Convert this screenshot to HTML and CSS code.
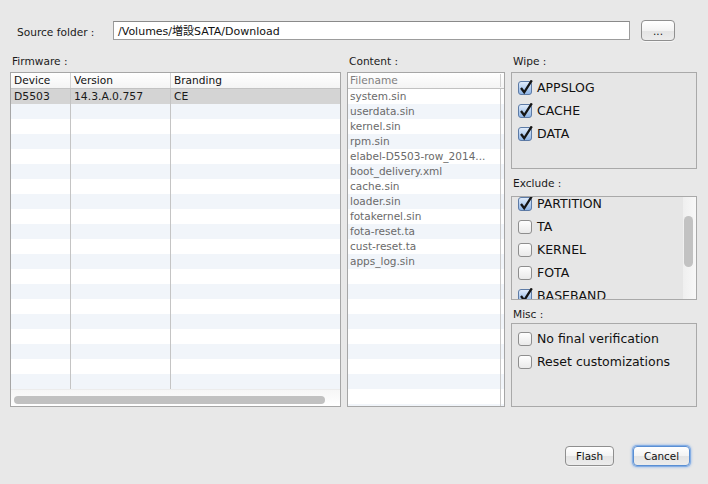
FILE: index.html
```html
<!DOCTYPE html>
<html>
<head>
<meta charset="utf-8">
<title>Flash</title>
<link rel="stylesheet" href="styles.css">
</head>
<body>
<svg class="defs" aria-hidden="true">
  <defs>
    <linearGradient id="gOn" x1="0" y1="0" x2="0" y2="1">
      <stop offset="0" stop-color="#e4eefb"/>
      <stop offset="0.5" stop-color="#b5cff0"/>
      <stop offset="1" stop-color="#8db4e6"/>
    </linearGradient>
    <linearGradient id="gOff" x1="0" y1="0" x2="0" y2="1">
      <stop offset="0" stop-color="#ffffff"/>
      <stop offset="1" stop-color="#e9e9e9"/>
    </linearGradient>
    <symbol id="cbOn" viewBox="0 0 16 16">
      <rect x="0.5" y="1.5" width="13" height="13" rx="2.5" fill="url(#gOn)" stroke="#5d7ba6"/>
      <path d="M3 8 L6.2 12.3 L13.8 0.3" fill="none" stroke="#151515" stroke-width="2.3"/>
    </symbol>
    <symbol id="cbOff" viewBox="0 0 16 16">
      <rect x="0.5" y="1.5" width="13" height="13" rx="2.5" fill="url(#gOff)" stroke="#8e8e8e"/>
    </symbol>
  </defs>
</svg>
<div class="window">
  <div class="source-row">
    <span class="src-label">Source folder :</span>
    <div class="path-field">/Volumes/増設SATA/Download</div>
    <button class="btn btn-dots">...</button>
  </div>

  <div class="main">
    <div class="col col-fw">
      <div class="col-label">Firmware :</div>
      <div class="table fw-table">
        <div class="thead fw-row">
          <div class="c c1">Device</div><div class="c c2">Version</div><div class="c c3">Branding</div>
        </div>
        <div class="tbody">
          <div class="fw-row row sel"><div class="c c1">D5503</div><div class="c c2">14.3.A.0.757</div><div class="c c3">CE</div></div>
          <div class="fw-row row"><div class="c c1"></div><div class="c c2"></div><div class="c c3"></div></div>
          <div class="fw-row row"><div class="c c1"></div><div class="c c2"></div><div class="c c3"></div></div>
          <div class="fw-row row"><div class="c c1"></div><div class="c c2"></div><div class="c c3"></div></div>
          <div class="fw-row row"><div class="c c1"></div><div class="c c2"></div><div class="c c3"></div></div>
          <div class="fw-row row"><div class="c c1"></div><div class="c c2"></div><div class="c c3"></div></div>
          <div class="fw-row row"><div class="c c1"></div><div class="c c2"></div><div class="c c3"></div></div>
          <div class="fw-row row"><div class="c c1"></div><div class="c c2"></div><div class="c c3"></div></div>
          <div class="fw-row row"><div class="c c1"></div><div class="c c2"></div><div class="c c3"></div></div>
          <div class="fw-row row"><div class="c c1"></div><div class="c c2"></div><div class="c c3"></div></div>
          <div class="fw-row row"><div class="c c1"></div><div class="c c2"></div><div class="c c3"></div></div>
          <div class="fw-row row"><div class="c c1"></div><div class="c c2"></div><div class="c c3"></div></div>
          <div class="fw-row row"><div class="c c1"></div><div class="c c2"></div><div class="c c3"></div></div>
          <div class="fw-row row"><div class="c c1"></div><div class="c c2"></div><div class="c c3"></div></div>
          <div class="fw-row row"><div class="c c1"></div><div class="c c2"></div><div class="c c3"></div></div>
          <div class="fw-row row"><div class="c c1"></div><div class="c c2"></div><div class="c c3"></div></div>
          <div class="fw-row row"><div class="c c1"></div><div class="c c2"></div><div class="c c3"></div></div>
          <div class="fw-row row"><div class="c c1"></div><div class="c c2"></div><div class="c c3"></div></div>
          <div class="fw-row row"><div class="c c1"></div><div class="c c2"></div><div class="c c3"></div></div>
          <div class="fw-row row"><div class="c c1"></div><div class="c c2"></div><div class="c c3"></div></div>
        </div>
        <div class="hscroll"><div class="hthumb"></div></div>
      </div>
    </div>

    <div class="col col-ct">
      <div class="col-label">Content :</div>
      <div class="table ct-table">
        <div class="thead ct-row"><div class="c cf">Filename</div></div>
        <div class="tbody ct-body">
          <div class="ct-row row"><div class="c cf">system.sin</div></div>
          <div class="ct-row row"><div class="c cf">userdata.sin</div></div>
          <div class="ct-row row"><div class="c cf">kernel.sin</div></div>
          <div class="ct-row row"><div class="c cf">rpm.sin</div></div>
          <div class="ct-row row"><div class="c cf">elabel-D5503-row_2014...</div></div>
          <div class="ct-row row"><div class="c cf">boot_delivery.xml</div></div>
          <div class="ct-row row"><div class="c cf">cache.sin</div></div>
          <div class="ct-row row"><div class="c cf">loader.sin</div></div>
          <div class="ct-row row"><div class="c cf">fotakernel.sin</div></div>
          <div class="ct-row row"><div class="c cf">fota-reset.ta</div></div>
          <div class="ct-row row"><div class="c cf">cust-reset.ta</div></div>
          <div class="ct-row row"><div class="c cf">apps_log.sin</div></div>
          <div class="ct-row row"><div class="c cf"></div></div>
          <div class="ct-row row"><div class="c cf"></div></div>
          <div class="ct-row row"><div class="c cf"></div></div>
          <div class="ct-row row"><div class="c cf"></div></div>
          <div class="ct-row row"><div class="c cf"></div></div>
          <div class="ct-row row"><div class="c cf"></div></div>
          <div class="ct-row row"><div class="c cf"></div></div>
          <div class="ct-row row"><div class="c cf"></div></div>
          <div class="ct-row row"><div class="c cf"></div></div>
          <div class="ct-row row"><div class="c cf"></div></div>
        </div>
      </div>
    </div>

    <div class="col col-opt">
      <div class="col-label">Wipe :</div>
      <div class="group wipe">
        <div class="item"><svg class="cb"><use href="#cbOn"/></svg><span>APPSLOG</span></div>
        <div class="item"><svg class="cb"><use href="#cbOn"/></svg><span>CACHE</span></div>
        <div class="item"><svg class="cb"><use href="#cbOn"/></svg><span>DATA</span></div>
      </div>
      <div class="col-label sub sub-ex">Exclude :</div>
      <div class="group exclude">
        <div class="ex-list">
          <div class="item"><svg class="cb"><use href="#cbOn"/></svg><span>PARTITION</span></div>
          <div class="item"><svg class="cb"><use href="#cbOff"/></svg><span>TA</span></div>
          <div class="item"><svg class="cb"><use href="#cbOff"/></svg><span>KERNEL</span></div>
          <div class="item"><svg class="cb"><use href="#cbOff"/></svg><span>FOTA</span></div>
          <div class="item"><svg class="cb"><use href="#cbOn"/></svg><span>BASEBAND</span></div>
        </div>
        <div class="vscroll"><div class="vthumb"></div></div>
      </div>
      <div class="col-label sub sub-misc">Misc :</div>
      <div class="group misc">
        <div class="item"><svg class="cb"><use href="#cbOff"/></svg><span>No final verification</span></div>
        <div class="item"><svg class="cb"><use href="#cbOff"/></svg><span>Reset customizations</span></div>
      </div>
    </div>
  </div>

  <div class="actions">
    <button class="btn btn-flash">Flash</button>
    <button class="btn btn-cancel">Cancel</button>
  </div>
</div>
</body>
</html>
```
FILE: styles.css
```css
* { box-sizing: border-box; }
html, body { margin: 0; padding: 0; }
body {
  background: #e8e8e8;
  font-family: "DejaVu Sans", "Noto Sans CJK JP", sans-serif;
  color: #1a1a1a;
}
.defs { width: 0; height: 0; display: block; overflow: hidden; }
.window {
  width: 708px;
  height: 484px;
  display: flex;
  flex-direction: column;
  overflow: hidden;
}

/* source row */
.source-row {
  margin-top: 20px;
  height: 21px;
  display: flex;
  align-items: center;
  padding-left: 17px;
}
.src-label { width: 96px; font-size: 10.6px; padding-top: 2px; }
.path-field {
  width: 517px;
  height: 19px;
  background: #fff;
  border: 1px solid #9c9c9c;
  border-top-color: #8a8a8a;
  font-size: 11px;
  line-height: 19px;
  padding-left: 4px;
  color: #111;
  white-space: nowrap;
}
.btn {
  font-family: "DejaVu Sans", sans-serif;
  font-size: 10.4px;
  color: #111;
  background: linear-gradient(#ffffff, #f3f3f3 50%, #e4e4e4 51%, #ececec);
  border: 1px solid #8f8f8f;
  border-radius: 4px;
  padding: 0;
  box-shadow: 0 1px 0 rgba(255,255,255,0.6);
}
.btn-dots { margin-left: 11px; width: 34px; height: 21px; line-height: 14px; }

/* main */
.main {
  margin-top: 14px;
  display: flex;
  padding-left: 10px;
  gap: 6px;
}
.col { display: flex; flex-direction: column; }
.col-fw { width: 331px; }
.col-ct { width: 158px; }
.col-opt { width: 186px; }
.col-label {
  height: 17px;
  font-size: 10.6px;
  line-height: 12px;
  padding-left: 2px;
  flex: none;
}
.col-label.sub-ex { height: 27px; padding-top: 8px; }
.col-label.sub-misc { height: 23px; padding-top: 8px; }

.table {
  height: 335px;
  border: 1px solid #a6a6a6;
  background: #fff;
  display: flex;
  flex-direction: column;
  overflow: hidden;
}
.thead {
  height: 16px;
  flex: none;
  background: linear-gradient(#ffffff, #f4f4f4);
  border-bottom: 1px solid #c2c2c2;
  font-size: 10.6px;
  line-height: 15px;
  color: #111;
}
.tbody { flex: 1; overflow: hidden; }
.row { height: 15px; font-size: 10.8px; line-height: 15px; }
.row:nth-child(even) { background: #f1f5fa; }
.row.sel { background: #d4d4d4; }

.fw-row { display: flex; }
.fw-row .c { padding-left: 3px; white-space: nowrap; overflow: hidden; }
.fw-row .c1 { width: 60px; border-right: 1px solid #c4c4c4; }
.fw-row .c2 { width: 100px; border-right: 1px solid #c4c4c4; }
.fw-row .c3 { flex: 1; }
.thead.fw-row .c1, .thead.fw-row .c2 { border-right-color: #d4d4d4; }

.hscroll {
  height: 17px;
  flex: none;
  background: linear-gradient(#f6f6f6, #ffffff);
  border-top: 1px solid #ececec;
  padding: 6px 0 0 3px;
}
.hthumb {
  width: 311px;
  height: 8px;
  border-radius: 4px;
  background: #c1c1c1;
}

.ct-row { display: flex; }
.ct-row .cf {
  width: 153px;
  border-right: 1px solid #c8c8c8;
  padding-left: 2px;
  white-space: nowrap;
  overflow: hidden;
  color: #6a6a6a;
}
.thead.ct-row .cf { color: #808080; border-right-color: #d0d0d0; height: 13px; margin-top: 1px; line-height: 13px; }
.ct-body .cf { font-size: 10.5px; }

/* groups */
.group {
  border: 1px solid #a9a9a9;
  background: #e6e6e6;
  flex: none;
}
.wipe { height: 97px; padding: 3px 0 0 6px; }
.exclude { height: 104px; display: flex; overflow: hidden; }
.misc { height: 84px; padding: 3px 0 0 6px; }
.item {
  height: 23px;
  display: flex;
  align-items: center;
  font-size: 12.5px;
  color: #111;
  white-space: nowrap;
}
.cb { width: 16px; height: 16px; flex: none; margin-right: 3px; overflow: visible; }
.ex-list { flex: 1; margin-top: -5px; padding-left: 6px; }
.vscroll {
  width: 13px;
  flex: none;
  background: linear-gradient(90deg, #efefef, #f8f8f8);
  padding: 19px 0 0 1px;
}
.vthumb {
  width: 9px;
  height: 51px;
  border-radius: 5px;
  background: #c2c2c2;
}

/* actions */
.actions {
  margin-top: 39px;
  display: flex;
  justify-content: flex-end;
  padding-right: 18px;
  gap: 19px;
}
.btn-flash { width: 49px; height: 20px; }
.btn-cancel {
  width: 57px;
  height: 20px;
  border-color: #5a8fd3;
  box-shadow: 0 0 0 1px rgba(110, 160, 225, 0.7), 0 0 2px 2px rgba(130, 175, 235, 0.45);
}
```
